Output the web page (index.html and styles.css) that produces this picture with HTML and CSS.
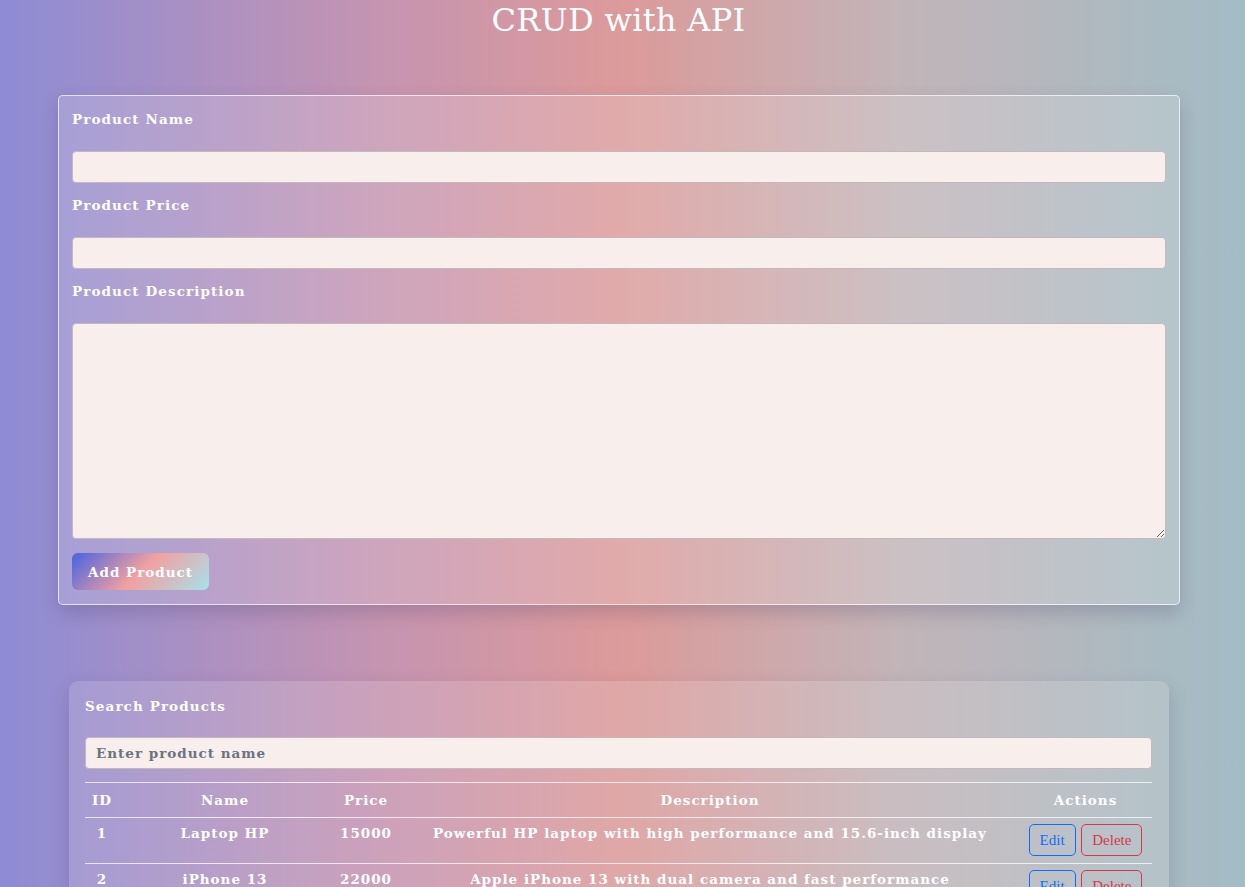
FILE: index.html
```html
<!DOCTYPE html>
<html lang="en">
<head>
<meta charset="utf-8">
<title>CRUD with API</title>
<link rel="stylesheet" href="styles.css">
</head>
<body>
  <h1 class="title">CRUD with API</h1>
  <main class="main">
    <form class="form-card" onsubmit="return false;">
      <label class="label" for="name">Product Name</label>
      <input class="field" id="name" type="text">
      <label class="label" for="price">Product Price</label>
      <input class="field" id="price" type="text">
      <label class="label" for="desc">Product Description</label>
      <textarea class="field area" id="desc"></textarea>
      <button class="add-btn" type="button">Add Product</button>
    </form>

    <section class="search-card">
      <label class="label" for="search">Search Products</label>
      <input class="field search" id="search" type="text" placeholder="Enter product name">
      <table class="table">
        <colgroup>
          <col class="c-id"><col class="c-name"><col class="c-price"><col class="c-desc"><col class="c-act">
        </colgroup>
        <thead>
          <tr><th>ID</th><th>Name</th><th>Price</th><th>Description</th><th>Actions</th></tr>
        </thead>
        <tbody>
          <tr>
            <td>1</td><td>Laptop HP</td><td>15000</td>
            <td>Powerful HP laptop with high performance and 15.6-inch display</td>
            <td><button class="btn edit">Edit</button> <button class="btn del">Delete</button></td>
          </tr>
          <tr>
            <td>2</td><td>iPhone 13</td><td>22000</td>
            <td>Apple iPhone 13 with dual camera and fast performance</td>
            <td><button class="btn edit">Edit</button> <button class="btn del">Delete</button></td>
          </tr>
          <tr>
            <td>3</td><td>Samsung TV</td><td>18000</td>
            <td>Samsung 55-inch smart TV with 4K resolution</td>
            <td><button class="btn edit">Edit</button> <button class="btn del">Delete</button></td>
          </tr>
        </tbody>
      </table>
    </section>
  </main>
</body>
</html>
```

FILE: styles.css
```css
* { box-sizing: border-box; }

html, body { margin: 0; padding: 0; }

body {
  min-height: 100vh;
  background: linear-gradient(to right, #8d8cd5 0%, #c494b1 30%, #dc9a9a 50%, #c2b4b8 72%, #a2bcc5 100%);
  background-attachment: fixed;
  font-family: "DejaVu Serif", Georgia, serif;
  color: #fff;
  padding-bottom: 60px;
}

.title {
  margin: 0;
  font-weight: normal;
  font-size: 32px;
  line-height: 40px;
  text-align: center;
  letter-spacing: 0.3px;
  color: #fff;
  padding-right: 8px;
}

.main {
  margin: 55px 65px 0 58px;
}

.form-card {
  display: block;
  background: rgba(255, 255, 255, 0.16);
  border: 1px solid rgba(255, 255, 255, 0.7);
  border-radius: 5px;
  padding: 14px 13px 14px 13px;
  box-shadow: 0 8px 18px rgba(60, 50, 90, 0.22);
}

.label {
  display: block;
  font-weight: bold;
  font-size: 13.5px;
  line-height: 18px;
  letter-spacing: 1.1px;
  color: #fff;
  margin-bottom: 23px;
}

.field {
  display: block;
  width: 100%;
  height: 32px;
  margin: 0 0 13px 0;
  background: #f8eeec;
  border: 1px solid #c3b9bd;
  border-radius: 4px;
  padding: 0 10px;
  font-family: "DejaVu Serif", Georgia, serif;
  font-weight: bold;
  font-size: 13.5px;
  letter-spacing: 1px;
  color: #444;
  outline: none;
}

.area {
  height: 216px;
  resize: vertical;
  padding: 8px 10px;
  margin-bottom: 14px;
}

.add-btn {
  display: block;
  height: 37px;
  width: 137px;
  border: none;
  border-radius: 6px;
  background: linear-gradient(135deg, #4563e2 0%, #f2a0a0 50%, #a6e2ea 100%);
  color: #fff;
  font-family: "DejaVu Serif", Georgia, serif;
  font-weight: bold;
  font-size: 13.5px;
  letter-spacing: 1px;
  padding: 0;
  cursor: pointer;
}

.search-card {
  margin: 76px 11px 0 11px;
  background: rgba(255, 255, 255, 0.13);
  border-radius: 9px;
  padding: 16px 17px 20px 16px;
  box-shadow: 0 8px 20px rgba(60, 50, 90, 0.2);
}

.search-card .label { margin-bottom: 22px; }

.search {
  height: 32px;
  margin-bottom: 13px;
}

.search::placeholder {
  color: #6a7480;
  opacity: 1;
}

.table {
  width: 100%;
  border-collapse: collapse;
  table-layout: fixed;
  font-size: 13.5px;
  letter-spacing: 1px;
  font-weight: bold;
}

.c-id { width: 34px; }
.c-name { width: 212px; }
.c-price { width: 70px; }
.c-act { width: 133px; }

.table th,
.table td {
  border-top: 1px solid rgba(255, 255, 255, 0.75);
  text-align: center;
  vertical-align: top;
  line-height: 18px;
  white-space: nowrap;
  overflow: hidden;
}

.table th {
  padding: 8px 0 8px 0;
}

.table td {
  padding: 6px 0 7px 0;
}

.btn {
  height: 32px;
  background: transparent;
  border: 1px solid;
  border-radius: 5px;
  padding: 0 10px;
  font-family: "Liberation Serif", "Times New Roman", serif;
  font-size: 15px;
  font-weight: normal;
  letter-spacing: 0;
  cursor: pointer;
  vertical-align: top;
}

.edit { color: #0d6efd; border-color: #0d6efd; }
.del { color: #dc3545; border-color: #dc3545; }
```
